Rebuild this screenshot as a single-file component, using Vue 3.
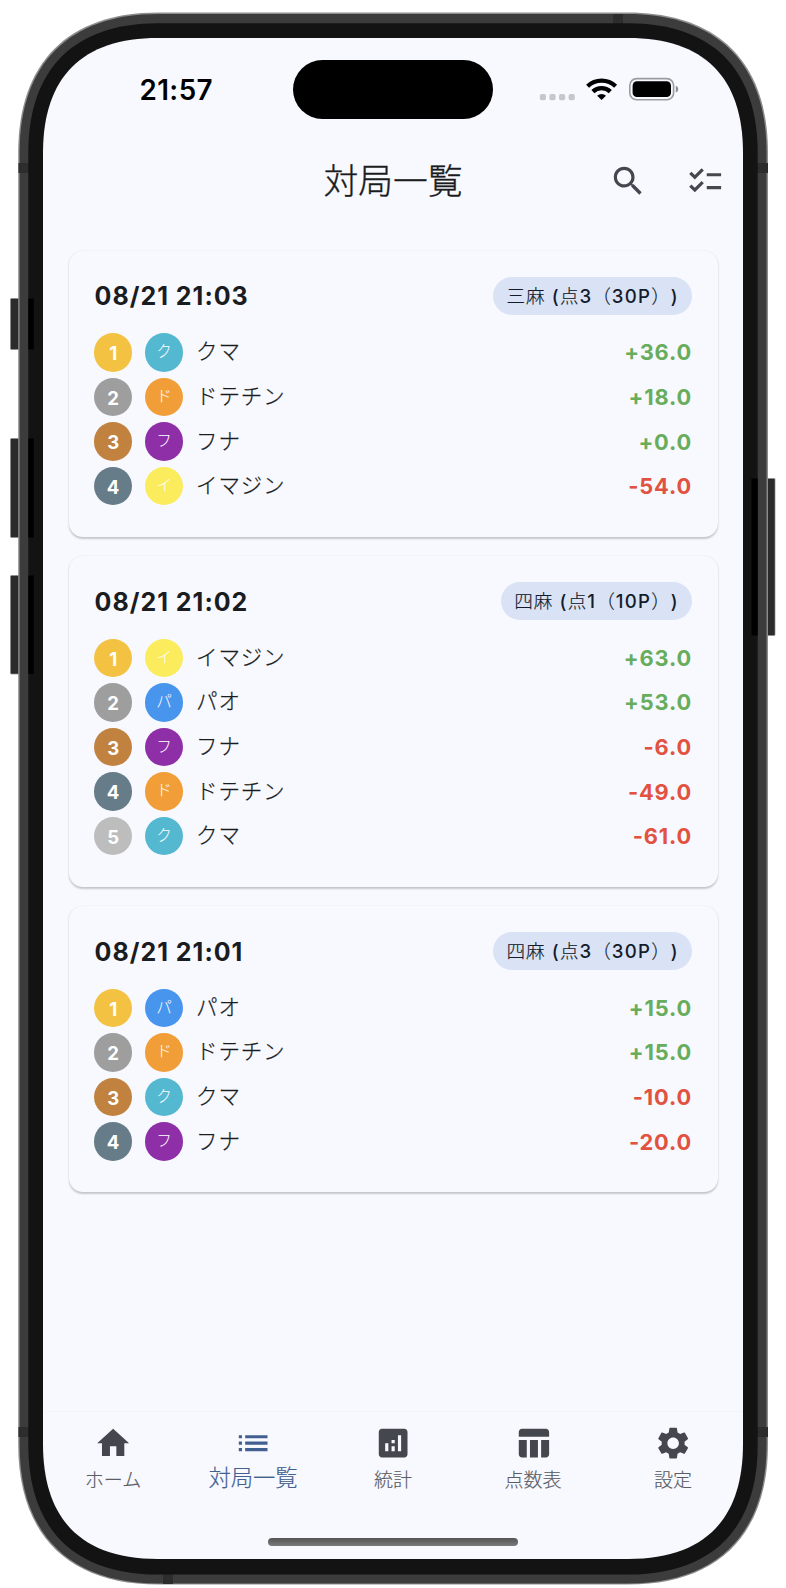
<script setup>
const colors = {
  'ク': '#55b8d1',
  'ド': '#f19e38',
  'フ': '#8f2fa8',
  'イ': '#fbec5d',
  'パ': '#4895ee',
}
const rankColors = ['#f4c242', '#9e9e9e', '#c18240', '#667c89', '#bdbdbd']

const games = [
  {
    date: '08/21 21:03', rule: ['三麻', ' (', '点', '3', '（', '30P', '）', ')'],
    rows: [['クマ', '+36.0'], ['ドテチン', '+18.0'], ['フナ', '+0.0'], ['イマジン', '-54.0']],
  },
  {
    date: '08/21 21:02', rule: ['四麻', ' (', '点', '1', '（', '10P', '）', ')'],
    rows: [['イマジン', '+63.0'], ['パオ', '+53.0'], ['フナ', '-6.0'], ['ドテチン', '-49.0'], ['クマ', '-61.0']],
  },
  {
    date: '08/21 21:01', rule: ['四麻', ' (', '点', '3', '（', '30P', '）', ')'],
    rows: [['パオ', '+15.0'], ['ドテチン', '+15.0'], ['クマ', '-10.0'], ['フナ', '-20.0']],
  },
]

const tabs = [
  { label: 'ホーム', icon: 'M10 20v-6h4v6h5v-8h3L12 3 2 12h3v8z' },
  { label: '対局一覧', active: true, icon: 'M3 13h2v-2H3v2zm0 4h2v-2H3v2zm0-8h2V7H3v2zm4 4h14v-2H7v2zm0 4h14v-2H7v2zM7 7v2h14V7H7z' },
  { label: '統計', icon: 'M19 3H5c-1.1 0-2 .9-2 2v14c0 1.1.9 2 2 2h14c1.1 0 2-.9 2-2V5c0-1.1-.9-2-2-2zM9 17H7v-5h2v5zm4 0h-2v-3h2v3zm0-5h-2v-2h2v2zm4 5h-2V7h2v10z' },
  { label: '点数表', icon: 'M10 10.02h5V21h-5zM17 21h3c1.1 0 2-.9 2-2v-9h-5v11zm3-18H5c-1.1 0-2 .9-2 2v3h19V5c0-1.1-.9-2-2-2zM3 19c0 1.1.9 2 2 2h3V10H3v9z' },
  { label: '設定', icon: 'M19.14 12.94c.04-.3.06-.61.06-.94 0-.32-.02-.64-.07-.94l2.03-1.58c.18-.14.23-.41.12-.61l-1.92-3.32c-.12-.22-.37-.29-.59-.22l-2.39.96c-.5-.38-1.03-.7-1.62-.94l-.36-2.54c-.04-.24-.24-.41-.48-.41h-3.84c-.24 0-.43.17-.47.41l-.36 2.54c-.59.24-1.13.57-1.62.94l-2.39-.96c-.22-.08-.47 0-.59.22L2.74 8.87c-.12.21-.08.47.12.61l2.03 1.58c-.05.3-.09.63-.09.94s.02.64.07.94l-2.03 1.58c-.18.14-.23.41-.12.61l1.92 3.32c.12.22.37.29.59.22l2.39-.96c.5.38 1.03.7 1.62.94l.36 2.54c.05.24.24.41.48.41h3.84c.24 0 .44-.17.47-.41l.36-2.54c.59-.24 1.13-.56 1.62-.94l2.39.96c.22.08.47 0 .59-.22l1.92-3.32c.12-.22.07-.47-.12-.61l-2.01-1.58zM12 15.6c-1.98 0-3.6-1.62-3.6-3.6s1.62-3.6 3.6-3.6 3.6 1.62 3.6 3.6-1.62 3.6-3.6 3.6z' },
]

// Rounded rectangle whose corners ease in: a is the corner's extent, h the handle length.
function smooth(l, t, r, b, a, h) {
  const c = a - h
  return `M${l + a} ${t}H${r - a}C${r - c} ${t} ${r} ${t + c} ${r} ${t + a}` +
    `V${b - a}C${r} ${b - c} ${r - c} ${b} ${r - a} ${b}` +
    `H${l + a}C${l + c} ${b} ${l} ${b - c} ${l} ${b - a}` +
    `V${t + a}C${l} ${t + c} ${l + c} ${t} ${l + a} ${t}Z`
}
const edge = smooth(18.2, 12.6, 768, 1584.6, 140, 90)
const band = smooth(19.6, 14, 766.6, 1583.4, 138.6, 89)
const bezel = smooth(28.3, 23.2, 757.7, 1574.6, 129.7, 84)
const glass = smooth(43, 38, 743, 1559, 115, 76)
</script>

<template>
  <div class="phone">
    <svg class="frame" width="786" height="1588" viewBox="0 0 786 1588">
      <g fill="#2b2b2b" stroke="#8a8a8a" stroke-width=".7">
        <rect x="10.5" y="298.5" width="12" height="51" rx="1" />
        <rect x="10.5" y="438.5" width="12" height="99" rx="1" />
        <rect x="10.5" y="575.5" width="12" height="98.5" rx="1" />
        <rect x="763" y="478.5" width="12" height="157" rx="1" />
      </g>
      <path :d="edge" fill="#8d8d8d" />
      <path :d="band" fill="#3c3c3c" />
      <g fill="#2d2d2d">
        <rect x="18.5" y="163" width="12" height="10" />
        <rect x="756" y="163" width="12" height="10" />
        <rect x="18.5" y="1427" width="12" height="10" />
        <rect x="756" y="1427" width="12" height="10" />
        <rect x="613" y="14" width="10" height="12" />
        <rect x="163" y="1572" width="10" height="12" />
      </g>
      <path :d="bezel" fill="#131313" />
      <g fill="#000">
        <rect x="28.3" y="298.5" width="5.5" height="51" />
        <rect x="28.3" y="438.5" width="5.5" height="99" />
        <rect x="28.3" y="575.5" width="5.5" height="98.5" />
        <rect x="751.5" y="478.5" width="6.2" height="157" />
      </g>
      <path :d="glass" fill="#f8f9ff" />
    </svg>

    <div class="screen">
      <header class="status">
        <div class="clock">21:57</div>
        <div class="island"></div>
        <svg class="indicators" width="140" height="26" viewBox="539 76 140 26">
          <g fill="#c6c7cc">
            <rect x="539.8" y="94" width="6.2" height="6.2" rx="1.8" />
            <rect x="549.4" y="94" width="6.2" height="6.2" rx="1.8" />
            <rect x="559" y="94" width="6.2" height="6.2" rx="1.8" />
            <rect x="568.6" y="94" width="6.2" height="6.2" rx="1.8" />
          </g>
          <g fill="none" stroke="#000" stroke-width="4.3">
            <path d="M587.6 86.3a20.1 20.1 0 0 1 28 0" />
            <path d="M592.9 91.6a12.4 12.4 0 0 1 17.4 0" />
          </g>
          <path d="M601.6 100.1l-4.4-4.4a6.3 6.3 0 0 1 8.8 0z" />
          <rect x="629.8" y="78.6" width="43.8" height="21.2" rx="6.8" fill="none" stroke="#9b9ca0" stroke-width="1.6" />
          <rect x="632.6" y="81.3" width="38.4" height="15.8" rx="4.4" />
          <path d="M675.8 85.8c3.2 1.2 3.2 5.6 0 6.8z" fill="#8d8e92" />
        </svg>
      </header>

      <div class="appbar">
        <h1>対局一覧</h1>
        <div class="actions">
          <svg width="38.3" height="38.3" viewBox="0 0 24 24"><path d="M15.5 14h-.79l-.28-.27C15.41 12.59 16 11.11 16 9.5 16 5.91 13.09 3 9.5 3S3 5.91 3 9.5 5.91 16 9.5 16c1.61 0 3.09-.59 4.23-1.57l.27.28v.79l5 4.99L20.49 19l-4.99-5zm-6 0C7.01 14 5 11.99 5 9.5S7.01 5 9.5 5 14 7.01 14 9.5 11.99 14 9.5 14z" /></svg>
          <svg width="38.3" height="38.3" viewBox="0 0 24 24"><path d="M22 7h-9v2h9V7zm0 8h-9v2h9v-2zM5.54 11L2 7.46l1.41-1.41 2.12 2.12 4.24-4.24 1.41 1.41L5.54 11zm0 8L2 15.46l1.41-1.41 2.12 2.12 4.24-4.24 1.41 1.41L5.54 19z" /></svg>
        </div>
      </div>

      <main class="list">
        <article v-for="game in games" :key="game.date" class="card">
          <div class="head">
            <h2>{{ game.date }}</h2>
            <span class="pill"><span v-for="(part, i) in game.rule" :key="i" :class="{ kanji: i % 2 === 0 }">{{ part }}</span></span>
          </div>
          <div v-for="(row, i) in game.rows" :key="row[0]" class="row">
            <span class="rank" :style="{ background: rankColors[i] }">{{ i + 1 }}</span>
            <span class="avatar" :style="{ background: colors[row[0][0]] }">{{ row[0][0] }}</span>
            <span class="name">{{ row[0] }}</span>
            <span class="score" :class="{ minus: row[1][0] === '-' }">{{ row[1] }}</span>
          </div>
        </article>
      </main>

      <nav class="tabs">
        <div v-for="tab in tabs" :key="tab.label" class="tab" :class="{ active: tab.active }">
          <svg width="38.3" height="38.3" viewBox="0 0 24 24"><path :d="tab.icon" /></svg>
          <span>{{ tab.label }}</span>
        </div>
      </nav>
      <div class="home-bar"></div>
    </div>
  </div>
</template>

<style>
body { background: #fff; overflow: hidden; }
</style>

<style scoped>
.phone {
  position: relative;
  box-sizing: border-box;
  width: 786px;
  height: 1588px;
  padding: 38px 43px 29px;
  font-family: Inter, "Noto Sans CJK JP", sans-serif;
  color: #1a1c20;
}
.frame { position: absolute; inset: 0; }
.screen {
  position: relative;
  height: 1521px;
  display: flex;
  flex-direction: column;
}
.status {
  display: grid;
  grid-template-columns: 250px 200px 250px;
  height: 58.5px;
  padding-top: 22px;
}
.clock {
  padding-left: 96.5px;
  font-size: 27.8px;
  font-weight: 600;
  letter-spacing: .4px;
  line-height: 60px;
  color: #000;
}
.island { height: 58.5px; border-radius: 30px; background: #000; }
.indicators { margin: 16px 0 0 46px; }
.appbar {
  display: grid;
  grid-template-columns: 200px 300px 200px;
  align-items: center;
  height: 60px;
  margin-top: 33px;
}
h1 {
  grid-column: 2;
  margin: 0 0 2px;
  text-align: center;
  font-size: 34.8px;
  font-weight: 300;
  line-height: 58px;
  -webkit-text-stroke: .35px currentColor;
}
.actions { display: flex; gap: 38.3px; padding-left: 66px; fill: #44474e; }
.list {
  flex: 1;
  display: flex;
  flex-direction: column;
  gap: 19.5px;
  padding: 39.5px 25.5px 0;
}
.card {
  box-sizing: border-box;
  padding: 26px 25.5px 28.6px;
  border-radius: 14px;
  background: #f8f9ff;
  box-shadow: 0 1.5px 2px rgba(0, 0, 0, .2), 0 0 2px rgba(0, 0, 0, .06);
}
.head {
  display: flex;
  justify-content: space-between;
  align-items: center;
  height: 37.8px;
  margin-bottom: 15.4px;
}
h2 { margin: 1px 0 0 .6px; font-size: 25px; font-weight: 700; letter-spacing: 1px; }
.pill {
  box-sizing: border-box;
  height: 37.8px;
  padding: 0 13px;
  border-radius: 19px;
  background: #dae2f5;
  color: #131c2b;
  font-size: 18.6px;
  font-weight: 500;
  letter-spacing: 1.3px;
  line-height: 39px;
  white-space: pre;
  text-spacing-trim: space-all;
}
.kanji { font-weight: 300; letter-spacing: .9px; -webkit-text-stroke: .15px currentColor; }
.row { display: flex; align-items: center; height: 44.55px; }
.rank, .avatar {
  width: 38.3px;
  height: 38.3px;
  border-radius: 50%;
  color: #fff;
  text-align: center;
}
.rank { margin-right: 12.5px; font-size: 18.6px; font-weight: 700; line-height: 40px; }
.avatar { margin-right: 13px; font-size: 15.6px; font-weight: 300; line-height: 37px; }
.name {
  flex: 1;
  margin-bottom: 1px;
  font-size: 21.5px;
  font-weight: 300;
  letter-spacing: .8px;
  line-height: 43px;
  -webkit-text-stroke: .25px currentColor;
}
.score { font-size: 21.8px; font-weight: 650; letter-spacing: .85px; color: #67ad5b; }
.score.minus { color: #e15241; }
.tabs {
  display: grid;
  grid-template-columns: repeat(5, 140px);
  height: 126px;
  border-top: 1px solid #f4f5fb;
}
.tab {
  display: flex;
  flex-direction: column;
  align-items: center;
  padding-top: 12px;
  fill: #44474e;
  color: #5b5e65;
  font-size: 19px;
  font-weight: 300;
  -webkit-text-stroke: .2px currentColor;
}
.tab span { line-height: 30px; margin-top: 4px; }
.tab.active { fill: #415f91; color: #415f91; font-size: 22.3px; }
.tab.active span { margin-top: 1px; }
.home-bar {
  width: 250px;
  height: 8px;
  margin: 0 auto 13px;
  border-radius: 4px;
  background: linear-gradient(#555, #7a7a7c);
}
</style>
